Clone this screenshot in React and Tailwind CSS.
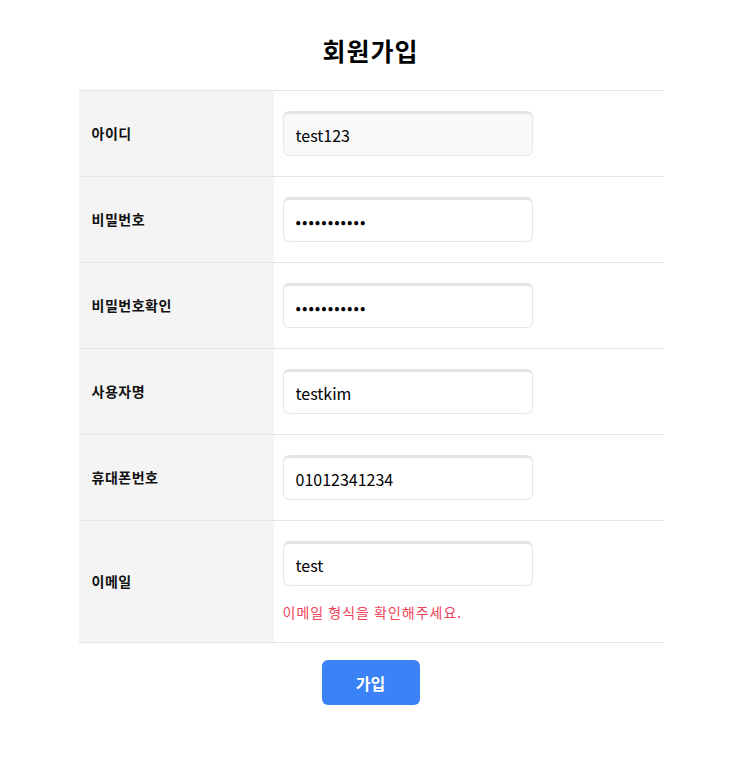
const rows = [
  { label: "아이디", value: "test123", type: "text", readOnly: true },
  { label: "비밀번호", value: "abcdefghijk", type: "password" },
  { label: "비밀번호확인", value: "abcdefghijk", type: "password" },
  { label: "사용자명", value: "testkim", type: "text" },
  { label: "휴대폰번호", value: "01012341234", type: "text" },
  { label: "이메일", value: "test", type: "text", error: "이메일 형식을 확인해주세요." },
];

const SignUp = () => {
  return (
    <div
      className="w-[741px] bg-white pt-[32px] pb-16"
      style={{ fontFamily: '"Noto Sans CJK KR", "Noto Sans", sans-serif' }}
    >
      <h1 className="text-center text-[25px] leading-[36px] font-bold text-black tracking-[1px]">
        회원가입
      </h1>

      <div className="mx-auto mt-[22px] w-[584px] border-t border-[#e5e5e5]">
        {rows.map((row) => (
          <div key={row.label} className="flex border-b border-[#e5e5e5]">
            <div className="w-[195px] shrink-0 bg-[#f4f4f4] pl-[13px] flex items-center">
              <span className="text-[14px] font-bold text-[#111] tracking-[0.5px]">{row.label}</span>
            </div>
            <div className="flex-1 pl-[9px] pt-[20px] pb-[20px]">
              <input
                type={row.type}
                defaultValue={row.value}
                readOnly={row.readOnly}
                className={`block w-[250px] h-[45px] rounded-md border border-[#e8e8e8] border-t-[3px] border-t-[#e4e4e4] px-3 text-[16px] text-black outline-none ${
                  row.readOnly ? "bg-[#f9f9f9]" : "bg-white"
                } ${row.type === "password" ? "tracking-[1px]" : ""}`}
              />
              {row.error && (
                <p className="mt-[16px] text-[14px] leading-[20px] text-[#f0435a] tracking-[1px]">
                  {row.error}
                </p>
              )}
            </div>
          </div>
        ))}
      </div>

      <div className="mt-[17px] flex justify-center">
        <button className="w-[98px] h-[45px] rounded-md bg-[#3b82f6] text-white text-[16px] font-bold">
          가입
        </button>
      </div>
    </div>
  );
};

export default SignUp;
